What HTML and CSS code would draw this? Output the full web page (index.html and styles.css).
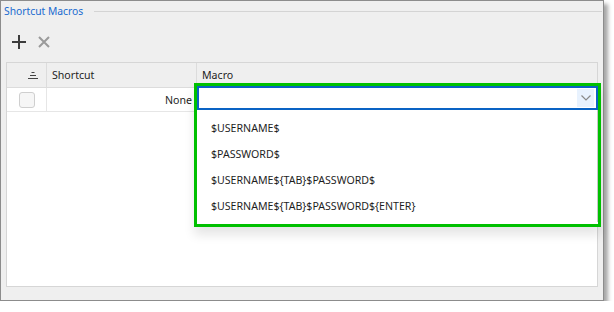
FILE: index.html
```html
<!DOCTYPE html>
<html>
<head>
    <title>Shortcut Macros</title>
    <link rel="stylesheet" href="styles.css">
</head>
<body>

<div class="panel">
    <div class="group-title">
        <span>Shortcut Macros</span>
        <div class="rule"></div>
    </div>

    <div class="toolbar">
        <button class="tool add" title="Add">
            <svg width="14" height="14" viewBox="0 0 14 14"><path d="M7 0v14M0 7h14" stroke="#3c3c3c" stroke-width="2"/></svg>
        </button>
        <button class="tool remove" title="Remove">
            <svg width="12" height="12" viewBox="0 0 12 12"><path d="M1 1l10 10M11 1L1 11" stroke="#9a9a9a" stroke-width="2"/></svg>
        </button>
    </div>

    <div class="grid">
        <div class="grid-head">
            <div class="col col-check">
                <svg width="10" height="8" viewBox="0 0 10 8"><path d="M3.5 1.5h3M2 4.5h6M0 7.5h10" stroke="#444" stroke-width="1"/></svg>
            </div>
            <div class="col col-shortcut">Shortcut</div>
            <div class="col col-macro">Macro</div>
        </div>
        <div class="grid-row">
            <div class="col col-check"><span class="checkbox"></span></div>
            <div class="col col-shortcut value">None</div>
            <div class="col col-macro"></div>
        </div>

        <div class="highlight">
            <div class="combo">
                <span class="combo-btn">
                    <svg width="10" height="6" viewBox="0 0 10 6"><path d="M0.5 0.5l4.5 4.5 4.5-4.5" fill="none" stroke="#8a8a8a" stroke-width="1.2"/></svg>
                </span>
            </div>
            <ul class="options">
                <li>$USERNAME$</li>
                <li>$PASSWORD$</li>
                <li>$USERNAME${TAB}$PASSWORD$</li>
                <li>$USERNAME${TAB}$PASSWORD${ENTER}</li>
            </ul>
        </div>
    </div>
</div>

</body>
</html>
```

FILE: styles.css
```css
body {
    margin: 0;
    background-color: #ffffff;
    font-family: "Noto Sans", "Liberation Sans", sans-serif;
    font-size: 10.6px;
    color: #1e1e1e;
}

.panel {
    width: 604px;
    height: 301px;
    background-color: #efefef;
    border: 1px solid #8c8c8c;
    box-shadow: 4px 4px 4px rgba(0, 0, 0, 0.35);
    display: flex;
    flex-direction: column;
    padding: 0 5px 13px 5px;
    box-sizing: border-box;
}

.group-title {
    display: flex;
    align-items: center;
    gap: 11px;
    height: 20px;
    color: #1a6bd0;
    font-size: 10.3px;
    margin-left: -2px;
}

.group-title .rule {
    flex: 1;
    height: 1px;
    background-color: #d4d4d4;
    margin-right: -4px;
}

.toolbar {
    display: flex;
    gap: 12px;
    height: 41px;
    align-items: center;
    padding-left: 6px;
}

.tool {
    background: none;
    border: none;
    padding: 0;
    display: flex;
    cursor: pointer;
}

.grid {
    position: relative;
    flex: 1;
    background-color: #ffffff;
    border: 1px solid #d6d6d6;
}

.grid-head,
.grid-row {
    display: flex;
}

.grid-head {
    height: 24px;
    background-color: #efefef;
    border-bottom: 1px solid #dcdcdc;
}

.grid-row {
    height: 23px;
    border-bottom: 1px solid #e6e6e6;
}

.col {
    display: flex;
    align-items: center;
    padding: 0 5px;
    box-sizing: border-box;
    border-right: 1px solid #dcdcdc;
}

.grid-row .col {
    border-right-color: #e6e6e6;
}

.col-check {
    width: 40px;
    justify-content: flex-end;
    padding-right: 8px;
}

.grid-row .col-check {
    justify-content: flex-start;
    padding-left: 12px;
}

.col-shortcut {
    width: 150px;
}

.col-macro {
    flex: 1;
    border-right: none;
}

.value {
    justify-content: flex-end;
    padding-right: 4px;
}

.checkbox {
    width: 14px;
    height: 14px;
    border: 1px solid #cfcfcf;
    border-radius: 3px;
    background-color: #f6f6f6;
}

.highlight {
    position: absolute;
    left: 187px;
    top: 20px;
    width: 401px;
    height: 138px;
    border: 3px solid #00c000;
    background-color: #ffffff;
    box-shadow: 0 8px 10px rgba(0, 0, 0, 0.1);
}

.combo {
    height: 20px;
    border: 2px solid #0a63c4;
    display: flex;
    justify-content: flex-end;
    align-items: center;
    padding-right: 2px;
}

.combo-btn {
    width: 17px;
    height: 18px;
    background-color: #e8f2fe;
    display: flex;
    align-items: center;
    justify-content: center;
}

.options {
    list-style: none;
    margin: 0;
    padding: 5px 0 0 14px;
    border-right: 1px solid #c8c8c8;
    height: 112px;
    box-sizing: border-box;
}

.options li {
    height: 26px;
    line-height: 26px;
}
```
